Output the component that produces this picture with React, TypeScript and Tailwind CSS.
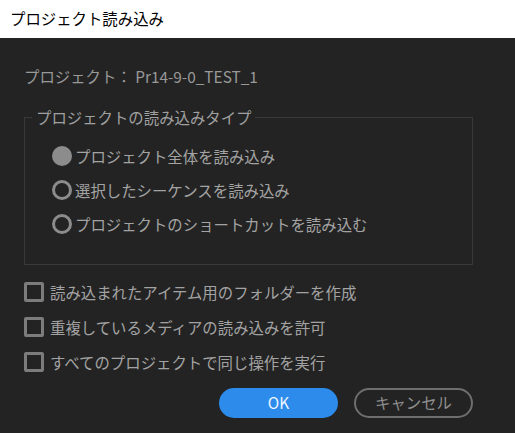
import React from "react";

const font = { fontFamily: '"Noto Sans CJK JP", "Noto Sans", sans-serif' };

function Radio({ checked, label }: { checked?: boolean; label: string }) {
  return (
    <div className="flex h-[34px] items-center">
      {checked ? (
        <span className="block h-[20px] w-[20px] shrink-0 rounded-full bg-[#8c8c8c]" />
      ) : (
        <span className="block h-[20px] w-[20px] shrink-0 rounded-full border-[3px] border-[#8c8c8c]" />
      )}
      <span className="ml-[3px] text-[15.4px] leading-[22px] text-[#a3a3a3]">{label}</span>
    </div>
  );
}

function Check({ label }: { label: string }) {
  return (
    <div className="flex h-[35px] items-center">
      <span className="block h-[20px] w-[20px] shrink-0 rounded-[2px] border-[3px] border-[#7c7c7c]" />
      <span className="ml-[6px] text-[15.4px] leading-[22px] text-[#a3a3a3]">{label}</span>
    </div>
  );
}

export default function App() {
  return (
    <div className="flex h-[433px] w-[515px] flex-col bg-[#232323]" style={font}>
      <div className="flex h-[38px] items-center bg-white pl-[10px] text-[15.4px] text-black">
        プロジェクト読み込み
      </div>
      <div className="flex flex-col pl-[24px]">
        <div className="mt-[27px] text-[15.4px] leading-[22px] text-[#999999]">
          プロジェクト： Pr14-9-0_TEST_1
        </div>
        <fieldset className="mt-[19px] w-[449px] border border-[#393939] pb-[23px]">
          <legend className="ml-[7px] px-[4px] text-[15.4px] leading-[22px] text-[#a0a0a0]">
            プロジェクトの読み込みタイプ
          </legend>
          <div className="mt-[11px] flex flex-col pl-[27px]">
            <Radio checked label="プロジェクト全体を読み込み" />
            <Radio label="選択したシーケンスを読み込み" />
            <Radio label="プロジェクトのショートカットを読み込む" />
          </div>
        </fieldset>
        <div className="mt-[9px] flex flex-col">
          <Check label="読み込まれたアイテム用のフォルダーを作成" />
          <Check label="重複しているメディアの読み込みを許可" />
          <Check label="すべてのプロジェクトで同じ操作を実行" />
        </div>
        <div className="mt-[9px] flex w-[449px] justify-end gap-[16px]">
          <button className="h-[30px] w-[119px] rounded-full bg-[#2d8ceb] text-[15.4px] text-[#eef6ff]">
            OK
          </button>
          <button className="h-[30px] w-[119px] rounded-full border-2 border-[#6e6e6e] text-[15.4px] text-[#8f8f8f]">
            キャンセル
          </button>
        </div>
      </div>
    </div>
  );
}
